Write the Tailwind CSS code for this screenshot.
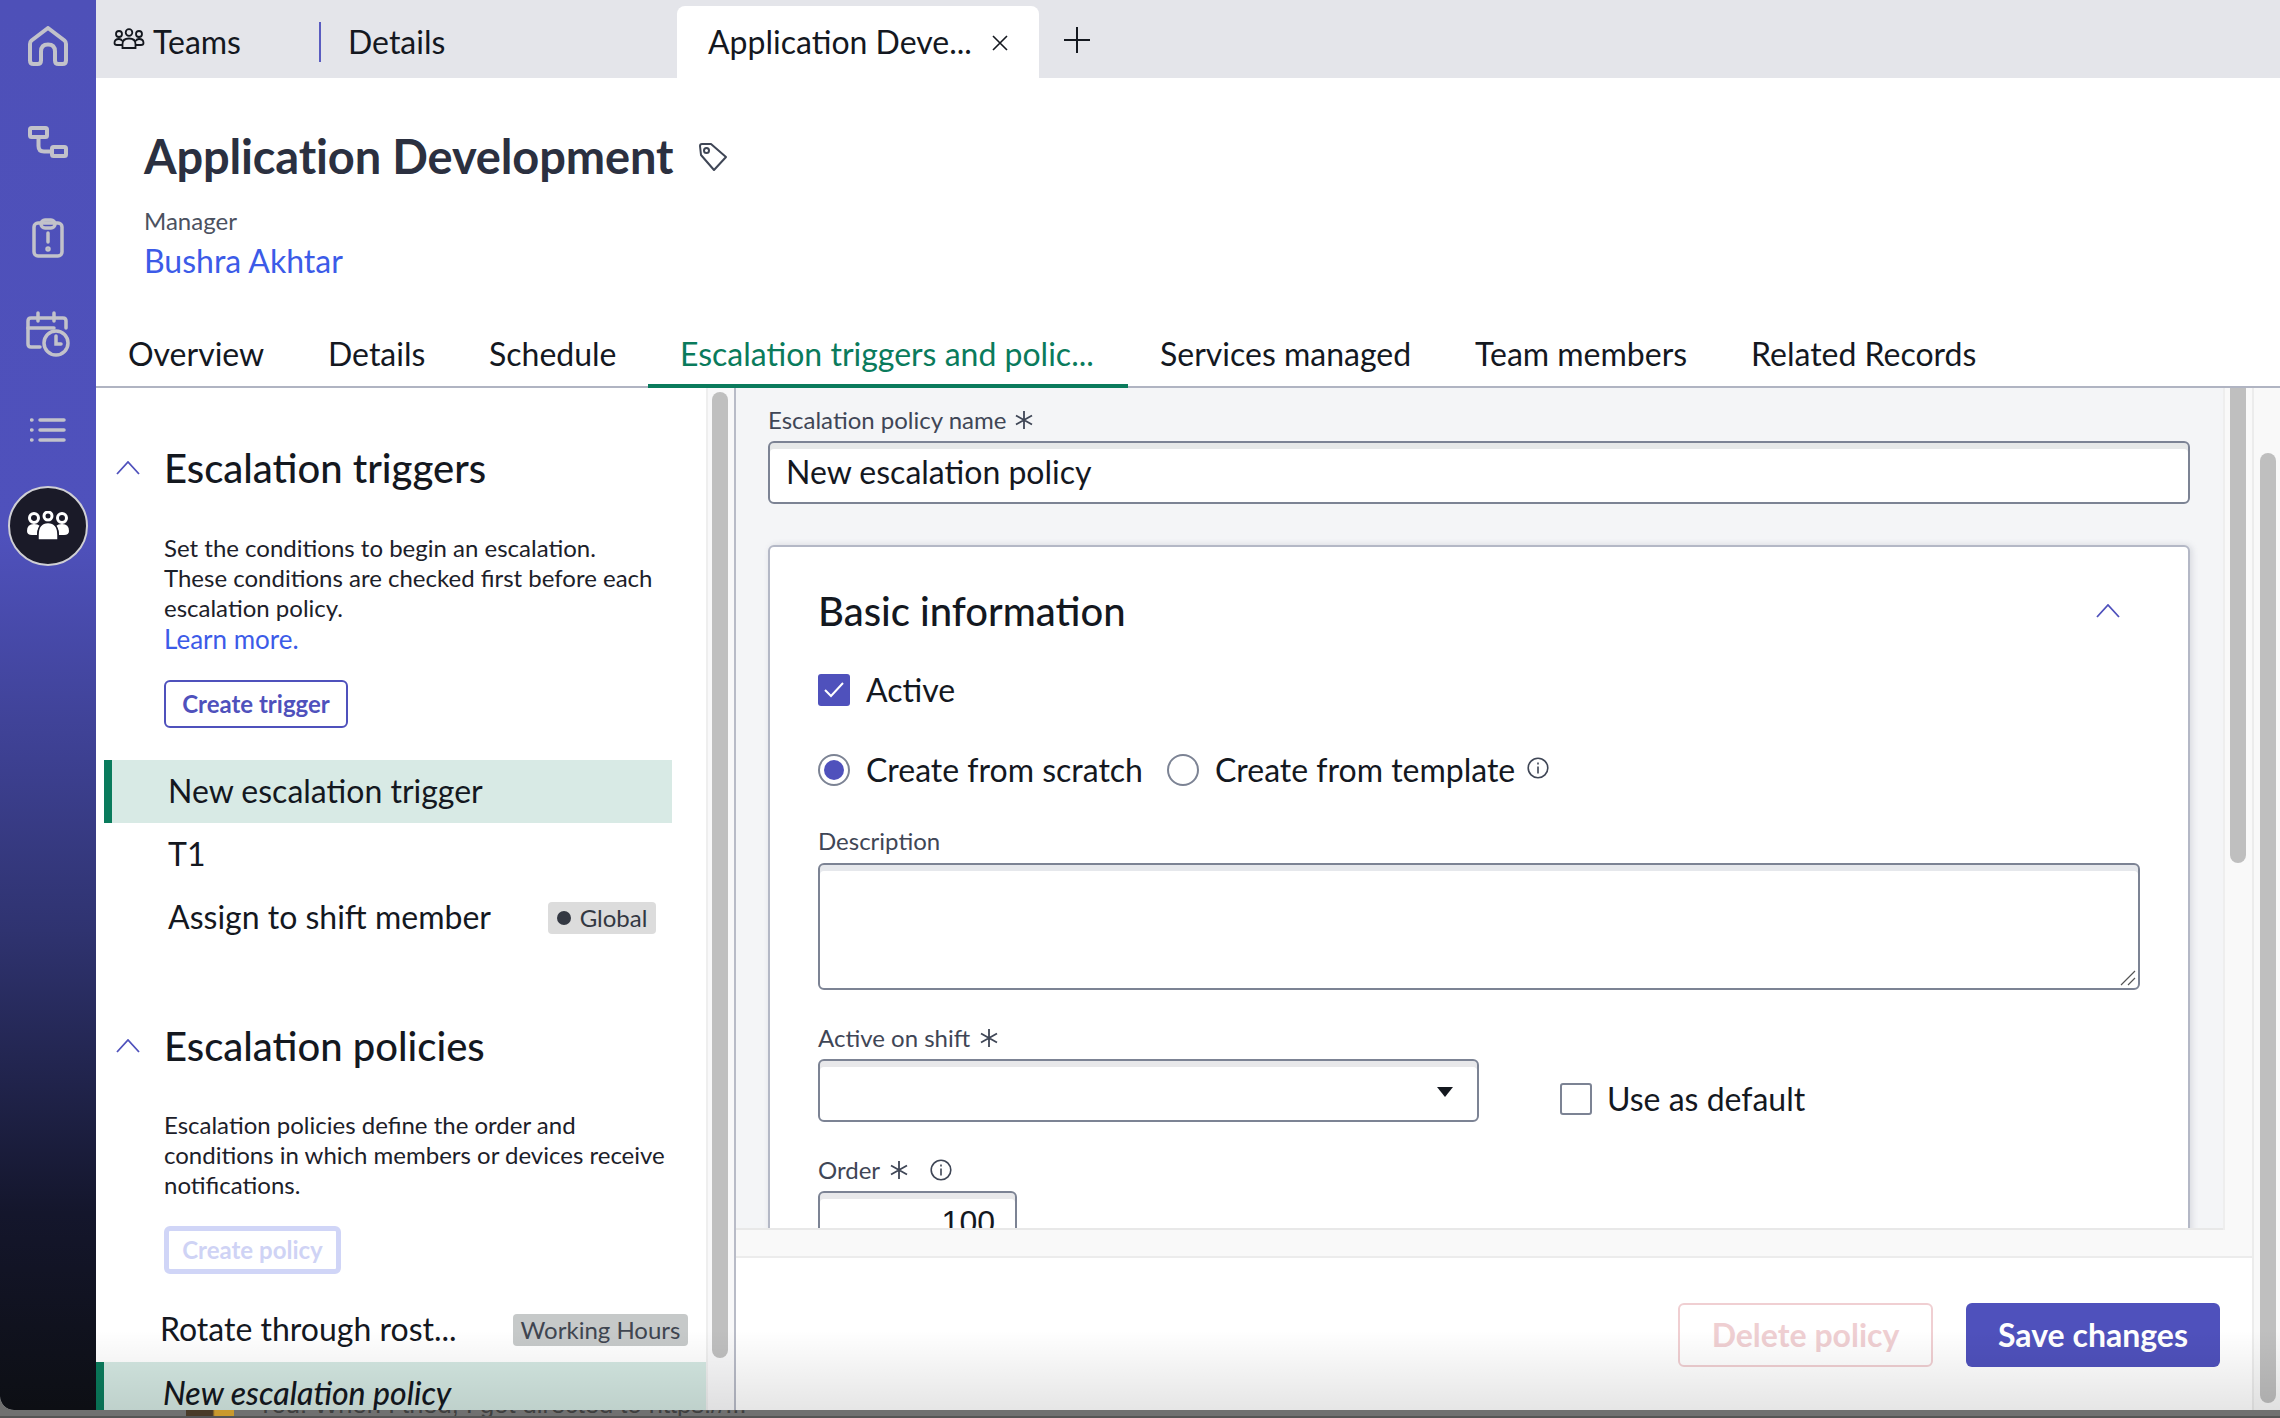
<!DOCTYPE html>
<html lang="en">
<head>
    <meta charset="utf-8">
    <title>Application Development</title>
    <script src="https://cdn.jsdelivr.net/npm/@tailwindcss/browser@4"></script>
</head>

<body class="bg-[#6e6e6e] overflow-hidden font-['Lato','Open_Sans',sans-serif] text-[#14181f]">
    <div class="w-[2280px] h-[1418px] flex flex-col overflow-hidden">
        <!-- window -->
        <div class="relative flex h-[1410px] shrink-0 overflow-hidden bg-white rounded-bl-[14px]">
            <!-- left nav -->
            <nav class="w-[96px] shrink-0 flex flex-col items-center bg-[linear-gradient(180deg,#4e50b8_0%,#4f51bc_38%,#2f3370_66%,#14162c_86%,#0d0f14_100%)] text-[#c2c2ca]">
                <div class="h-[96px] shrink-0 -mt-[2px] flex items-center justify-center">
                    <svg width="40" height="40" viewBox="0 0 40 40" fill="none" stroke="currentColor" stroke-width="4" stroke-linejoin="round"><path d="M20 2 36.500 14.500Q38 15.700 38 18V34.500Q38 38 34.500 38H30.500Q27 38 27 34.500V25.500Q27 18.500 20 18.500 13 18.500 13 25.500V34.500Q13 38 9.500 38H5.500Q2 38 2 34.500V18Q2 15.700 3.500 14.500Z"/></svg>
                </div>
                <div class="h-[96px] shrink-0 flex items-center justify-center">
                    <svg width="40" height="32" viewBox="0 0 40 32" fill="none" stroke="currentColor" stroke-width="4" stroke-linejoin="round"><rect x="2" y="2" width="17" height="9" rx="1.500"/><rect x="24" y="21" width="14" height="9" rx="1.500"/><path d="M10.500 11V20Q10.500 25.500 16 25.500H24"/></svg>
                </div>
                <div class="h-[96px] shrink-0 flex items-center justify-center">
                    <svg width="32" height="40" viewBox="0 0 32 40" fill="none" stroke="currentColor" stroke-width="3.500" stroke-linecap="round"><rect x="2" y="5" width="28" height="33" rx="4"/><rect x="9" y="2" width="14" height="8" rx="4"/><path d="M16 15V24"/><circle cx="16" cy="31" r="1" fill="currentColor"/></svg>
                </div>
                <div class="h-[96px] shrink-0 flex items-center justify-center">
                    <svg width="44" height="46" viewBox="0 0 44 46" fill="none" stroke="currentColor" stroke-width="3.500" stroke-linecap="round"><path d="M14 36H5Q2 36 2 33V10Q2 7 5 7H37Q40 7 40 10V17"/><path d="M2 17H28"/><path d="M12 2V10M28 2V10"/><circle cx="30" cy="32" r="12" /><path d="M30 25V33H35"/></svg>
                </div>
                <div class="h-[96px] shrink-0 flex items-center justify-center">
                    <svg width="36" height="24" viewBox="0 0 36 24" fill="none" stroke="currentColor" stroke-width="3.500" stroke-linecap="round"><path d="M10 2H34M10 12H34M10 22H34"/><path d="M1.500 2H2M1.500 12H2M1.500 22H2"/></svg>
                </div>
                <div class="w-[80px] h-[80px] mt-[8px] shrink-0 rounded-full bg-[#1a1a28] border-2 border-[#cfcfd4] flex items-center justify-center">
                    <svg width="44" height="30" viewBox="0 0 44 30" fill="#ffffff"><circle cx="8" cy="7" r="4.500" fill="none" stroke="#fff" stroke-width="3"/><circle cx="36" cy="7" r="4.500" fill="none" stroke="#fff" stroke-width="3"/><circle cx="22" cy="5" r="4" fill="none" stroke="#fff" stroke-width="3"/><path d="M1 20Q1 13 8 13 12 13 14 15 11 18 11 24H6Q1 24 1 20Z"/><path d="M43 20Q43 13 36 13 32 13 30 15 33 18 33 24H38Q43 24 43 20Z"/><path d="M12 29V24Q12 11.500 22 11.500 32 11.500 32 24V29Z" stroke="#1a1a28" stroke-width="1.500"/></svg>
                </div>
            </nav>

            <main class="flex-1 min-w-0 flex flex-col">
                <!-- open tabs -->
                <div class="h-[78px] shrink-0 flex bg-[#e4e5ea] text-[32px]">
                    <div class="w-[223px] shrink-0 flex items-center pl-[17px] gap-[8px]">
                        <svg width="32" height="22" viewBox="0 0 32 22" fill="none" stroke="#14181f" stroke-width="1.800"><circle cx="6" cy="6" r="3"/><circle cx="16" cy="4.500" r="3.300"/><circle cx="26" cy="6" r="3"/><path d="M9.500 13Q8 11 6 11 1.500 11 1.500 15 1.500 17 4 17H9"/><path d="M22.500 13Q24 11 26 11 30.500 11 30.500 15 30.500 17 28 17H23"/><path d="M9.500 20V16Q9.500 10.500 16 10.500 22.500 10.500 22.500 16V20Z"/></svg>
                        <span class="leading-none pt-[5px]">Teams</span>
                    </div>
                    <div class="w-[2px] h-[40px] mt-[22px] shrink-0 bg-[#5a5cc0]"></div>
                    <div class="w-[356px] shrink-0 flex items-center pl-[27px] pt-[5px]">Details</div>
                    <div class="w-[362px] shrink-0 mt-[6px] pl-[31px] pr-[30px] flex items-center justify-between bg-white rounded-t-[8px]">
                        <span class="whitespace-nowrap">Application Deve...</span>
                        <svg class="mt-[2px]" width="18" height="18" viewBox="0 0 18 18" stroke="#14181f" stroke-width="1.600" fill="none"><path d="M2 2 16 16M16 2 2 16"/></svg>
                    </div>
                    <div class="flex items-center pl-[24px] pt-[2px]">
                        <svg width="28" height="28" viewBox="0 0 28 28" stroke="#14181f" stroke-width="2" fill="none"><path d="M14 1V27M1 14H27"/></svg>
                    </div>
                </div>

                <!-- record header -->
                <div class="h-[242px] shrink-0 pl-[48px] pt-[46px]">
                    <div class="flex items-center h-[64px]">
                        <h1 class="text-[47px] tracking-[-0.15px] font-bold text-[#2b3040] leading-none">Application Development</h1>
                        <svg class="ml-[25px] mt-[2px]" width="30" height="30" viewBox="0 0 30 30" fill="none" stroke="#3f4656" stroke-width="2" stroke-linejoin="round"><path d="M2 4Q2 2 4 2H13L28 15 16 28 3 13Z"/><circle cx="8.500" cy="8.500" r="2.500"/></svg>
                    </div>
                    <div class="mt-[18px] text-[24px] leading-[30px] text-[#4b5160]">Manager</div>
                    <a class="block mt-[5px] text-[32px] leading-[40px] text-[#3c5be8]">Bushra Akhtar</a>
                </div>

                <!-- record tabs -->
                <div class="h-[68px] shrink-0 flex items-start pl-[32px] border-b-2 border-[#b0b4c2] text-[32px]">
                    <div class="pt-[10px] w-[200px] shrink-0">Overview</div>
                    <div class="pt-[10px] w-[161px] shrink-0">Details</div>
                    <div class="pt-[10px] w-[159px] shrink-0">Schedule</div>
                    <div class="pt-[10px] pl-[32px] w-[480px] h-[68px] shrink-0 text-[#0a7b5c] border-b-[4px] border-[#0a7b5c] whitespace-nowrap">Escalation triggers and polic...</div>
                    <div class="pt-[10px] pl-[32px] w-[347px] shrink-0">Services managed</div>
                    <div class="pt-[10px] w-[276px] shrink-0">Team members</div>
                    <div class="pt-[10px] shrink-0">Related Records</div>
                </div>

                <div class="flex-1 min-h-0 flex">
                    <!-- triggers and policies list -->
                    <section class="w-[610px] shrink-0 overflow-hidden">
                        <div class="mt-[56px] flex items-center pl-[20px] h-[48px]">
                            <svg width="24" height="14" viewBox="0 0 24 14" fill="none" stroke="#4f51bc" stroke-width="1.800"><path d="M1 13 12 1 23 13"/></svg>
                            <h2 class="ml-[24px] text-[40px] font-medium leading-none">Escalation triggers</h2>
                        </div>
                        <div class="mt-[41px] ml-[68px] w-[510px] text-[24px] leading-[30px] text-[#1c2029]">
                            <p>Set the conditions to begin an escalation.<br>These conditions are checked first before each<br>escalation policy.</p>
                            <a class="block mt-[1px] text-[26px] text-[#3c5be8]">Learn more.</a>
                        </div>
                        <button class="block mt-[26px] ml-[68px] w-[184px] h-[48px] border-2 border-[#4f51bc] rounded-[6px] text-[24px] font-bold text-[#4f51bc]">Create trigger</button>
                        <div class="mt-[32px] ml-[8px] w-[568px] h-[63px] flex items-center pl-[56px] pb-[2px] text-[32px] bg-[#d8eae5] border-l-[8px] border-[#0a7b5c]">New escalation trigger</div>
                        <div class="ml-[8px] h-[63px] flex items-center pl-[64px] pb-[2px] text-[32px]">T1</div>
                        <div class="ml-[8px] w-[568px] h-[63px] flex items-center pl-[64px] text-[32px]">
                            <span class="pb-[2px]">Assign to shift member</span>
                            <span class="ml-auto mr-[16px] w-[108px] h-[32px] flex items-center justify-center gap-[9px] rounded-[4px] bg-[#dcdcdc] text-[24px] text-[#333842]"><i class="w-[14px] h-[14px] rounded-full bg-[#333842]"></i>Global</span>
                        </div>
                        <div class="mt-[73px] flex items-center pl-[20px] h-[48px]">
                            <svg width="24" height="14" viewBox="0 0 24 14" fill="none" stroke="#4f51bc" stroke-width="1.800"><path d="M1 13 12 1 23 13"/></svg>
                            <h2 class="ml-[24px] text-[40px] font-medium leading-none">Escalation policies</h2>
                        </div>
                        <p class="mt-[40px] ml-[68px] w-[510px] text-[24px] leading-[30px] text-[#1c2029]">Escalation policies define the order and<br>conditions in which members or devices receive<br>notifications.</p>
                        <button class="block mt-[26px] ml-[68px] w-[177px] h-[48px] border-[5px] border-[#d0d5f7] rounded-[6px] text-[24px] font-bold text-[#cfd3f5]">Create policy</button>
                        <div class="mt-[24px] h-[64px] flex items-center pl-[64px] text-[32px] whitespace-nowrap">
                            <span class="pb-[2px]">Rotate through rost...</span>
                            <span class="ml-auto mr-[18px] w-[175px] h-[32px] flex items-center justify-center rounded-[4px] bg-[#c6c9c9] text-[24px] text-[#3f4550]">Working Hours</span>
                        </div>
                        <div class="h-[48px] flex pt-[7px] pl-[59px] text-[32px] font-medium italic bg-[#d4e8e2] border-l-[8px] border-[#0a7b5c]">New escalation policy</div>
                    </section>

                    <!-- list scrollbar -->
                    <div class="w-[30px] shrink-0 bg-[#f8f8f9] border-l-2 border-[#eeeeee] border-r-2 border-r-[#b8bbc7] pl-[4px] pt-[4px]">
                        <div class="w-[16px] h-[966px] rounded-full bg-[#bfbfbf]"></div>
                    </div>

                    <!-- policy editor -->
                    <div class="flex-1 min-w-0 flex flex-col">
                        <div class="h-[842px] shrink-0 flex">
                            <div class="flex-1 min-w-0 bg-[#f4f5f7] pl-[32px] pr-[33px] overflow-hidden border-b-2 border-[#e8e8e8]">
                                <div class="mt-[17px] flex items-center gap-[8px] text-[24px] leading-[30px] text-[#3f4656]">
                                    Escalation policy name
                                    <svg width="20" height="20" viewBox="0 0 20 20" stroke="#3f4656" stroke-width="1.800" fill="none"><path d="M10 1V19M2 5.500 18 14.500M18 5.500 2 14.500"/></svg>
                                </div>
                                <div class="mt-[6px] h-[63px] pl-[16px] pb-[2px] flex items-center rounded-[6px] border-2 border-[#7c8394] bg-white shadow-[inset_0_6px_0_#e6e8e8] text-[32px]">New escalation policy</div>

                                <!-- basic information card -->
                                <div class="mt-[41px] h-[700px] pl-[48px] pr-[19px] rounded-t-[6px] border-2 border-[#b4b8c6] bg-white shadow-[2px_0_6px_rgba(100,105,130,0.2)]">
                                    <div class="mt-[40px] flex items-center justify-between h-[48px] pr-[49px]">
                                        <h2 class="text-[40px] font-medium leading-none">Basic information</h2>
                                        <svg width="24" height="14" viewBox="0 0 24 14" fill="none" stroke="#4f51bc" stroke-width="1.800"><path d="M1 13 12 1 23 13"/></svg>
                                    </div>
                                    <div class="mt-[39px] flex items-center gap-[16px] text-[32px] h-[32px]">
                                        <span class="w-[32px] h-[32px] flex items-center justify-center rounded-[3px] bg-[#4f51bc]"><svg width="22" height="18" viewBox="0 0 22 18" fill="none" stroke="#fff" stroke-width="2"><path d="M2 9 8 15 20 2"/></svg></span>
                                        Active
                                    </div>
                                    <div class="mt-[48px] flex items-center h-[32px] text-[32px]">
                                        <span class="w-[32px] h-[32px] flex items-center justify-center rounded-full border-2 border-[#7c8394]"><i class="w-[20px] h-[20px] rounded-full bg-[#4f51bc]"></i></span>
                                        <span class="ml-[16px]">Create from scratch</span>
                                        <span class="ml-[24px] w-[32px] h-[32px] rounded-full border-2 border-[#7c8394]"></span>
                                        <span class="ml-[16px]">Create from template</span>
                                        <svg class="ml-[12px] -mt-[4px]" width="22" height="22" viewBox="0 0 22 22" fill="none" stroke="#3f4656" stroke-width="1.600"><circle cx="11" cy="11" r="9.800"/><path d="M11 9.500V16.500M11 5.500V7.500"/></svg>
                                    </div>
                                    <div class="mt-[40px] text-[24px] leading-[30px] text-[#3f4656]">Description</div>
                                    <div class="relative mt-[7px] h-[127px] w-[1322px] rounded-[6px] border-2 border-[#7c8394] bg-white shadow-[inset_0_6px_0_#e6e8ec]">
                                        <svg class="absolute right-[2px] bottom-[2px]" width="16" height="16" viewBox="0 0 16 16" stroke="#555" stroke-width="1.200"><path d="M1 15 15 1M8 15 15 8"/></svg>
                                    </div>
                                    <div class="mt-[33px] flex items-center gap-[9px] text-[24px] leading-[30px] text-[#3f4656]">
                                        Active on shift
                                        <svg width="20" height="20" viewBox="0 0 20 20" stroke="#3f4656" stroke-width="1.800" fill="none"><path d="M10 1V19M2 5.500 18 14.500M18 5.500 2 14.500"/></svg>
                                    </div>
                                    <div class="mt-[6px] flex items-start">
                                        <div class="w-[661px] h-[63px] pr-[23px] flex items-center justify-end rounded-[6px] border-2 border-[#7c8394] bg-white shadow-[inset_0_6px_0_#e8e8ea]">
                                            <svg class="mt-[2px]" width="18" height="12" viewBox="0 0 18 12" fill="#14181f"><path d="M1 1H17L9 11Z"/></svg>
                                        </div>
                                        <div class="ml-[81px] mt-[24px] flex items-center gap-[15px] text-[32px] h-[32px]">
                                            <span class="w-[32px] h-[32px] rounded-[3px] border-2 border-[#7c8394]"></span>
                                            Use as default
                                        </div>
                                    </div>
                                    <div class="mt-[33px] flex items-center gap-[9px] text-[24px] leading-[30px] text-[#3f4656]">
                                        Order
                                        <svg width="20" height="20" viewBox="0 0 20 20" stroke="#3f4656" stroke-width="1.800" fill="none"><path d="M10 1V19M2 5.500 18 14.500M18 5.500 2 14.500"/></svg>
                                        <svg class="ml-[12px]" width="22" height="22" viewBox="0 0 22 22" fill="none" stroke="#3f4656" stroke-width="1.600"><circle cx="11" cy="11" r="9.800"/><path d="M11 9.500V16.500M11 5.500V7.500"/></svg>
                                    </div>
                                    <div class="mt-[6px] w-[199px] h-[63px] pr-[20px] pt-[7px] text-right rounded-[6px] border-2 border-[#7c8394] bg-white shadow-[inset_0_6px_0_#e8e8ea] font-['Liberation_Sans',sans-serif] text-[32px] leading-[44px]">100</div>
                                </div>
                            </div>
                            <div class="w-[29px] shrink-0 bg-[#f9f9f9] border-l-2 border-[#eeeeee] pl-[5px]">
                                <div class="w-[16px] h-[475px] rounded-b-full bg-[#bfbfbf]"></div>
                            </div>
                        </div>
                        <div class="h-[28px] shrink-0 bg-[#f9f9f9] border-b-2 border-[#ececec]"></div>
                        <div class="flex-1 flex justify-end items-start gap-[33px] pt-[45px] pr-[32px]">
                            <button class="w-[255px] h-[64px] rounded-[6px] border-2 border-[#f0cfd2] text-[32px] font-bold text-[#efcfd2]">Delete policy</button>
                            <button class="w-[254px] h-[64px] rounded-[6px] bg-[#4f51bc] text-[32px] font-bold text-white">Save changes</button>
                        </div>
                    </div>

                    <!-- page scrollbar -->
                    <div class="w-[28px] shrink-0 bg-[#f9f9f9] border-l-2 border-[#ececec] pl-[6px] pt-[65px]">
                        <div class="w-[16px] h-[950px] rounded-full bg-[#bfbfbf]"></div>
                    </div>
                </div>
            </main>

            <!-- fade at the bottom of the window -->
            <div class="absolute left-[96px] right-0 bottom-0 h-[80px] pointer-events-none bg-gradient-to-b from-transparent to-black/10"></div>
        </div>

        <!-- what shows below the window -->
        <div class="h-[8px] shrink-0 overflow-hidden flex bg-[#707070] border-b-2 border-[#555555]">
            <div class="ml-[186px] w-[48px] h-[8px] bg-[linear-gradient(90deg,#4a3a28_55%,#c9992e_60%)]"></div>
            <div class="ml-[23px] -mt-[24px] text-[25.500px] leading-[36px] text-[#3f3f3f] font-['Liberation_Sans',sans-serif] whitespace-nowrap">You: When I tried, I got directed to https://...</div>
        </div>
    </div>
</body>
</html>
